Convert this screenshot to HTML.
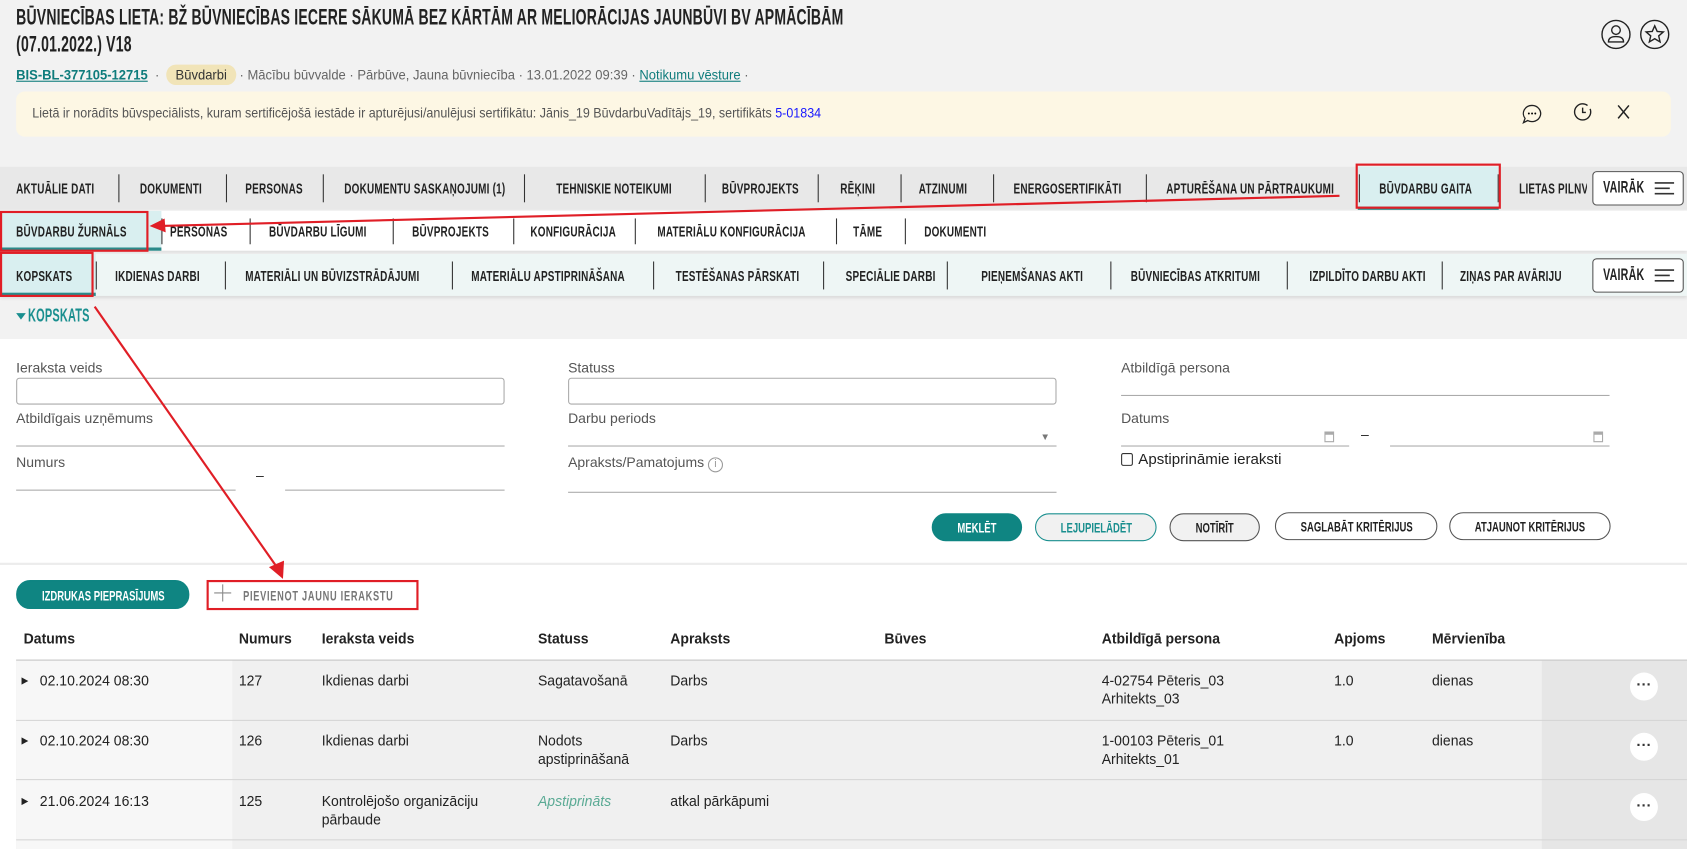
<!DOCTYPE html>
<html><head><meta charset="utf-8"><style>
*{margin:0;padding:0;box-sizing:border-box}
html,body{width:1687px;height:849px;overflow:hidden;background:#f2f2f2}
#w{position:absolute;left:0;top:0;width:1568px;height:789px;transform:scale(1.07589,1.07605);transform-origin:0 0;font-family:"Liberation Sans",Arial,sans-serif;color:#222}
.a{position:absolute}
.c{position:absolute;font-weight:bold;white-space:nowrap;transform:scaleX(.66);transform-origin:0 50%;font-size:14px;color:#222;letter-spacing:.3px}
.d{position:absolute;width:1px;background:#333}
.lbl{position:absolute;font-size:13px;color:#555}
.ul{position:absolute;height:1px;background:#aaa}
.btn{position:absolute;height:26px;border-radius:13px;border:1px solid #555;background:#fff}
.btn span{position:absolute;left:50%;top:5px;font-weight:bold;font-size:13px;white-space:nowrap;transform:translateX(-50%) scaleX(.68);color:#222}
.t{position:absolute;font-size:14px;color:#222;line-height:17px;transform:scaleX(.93);transform-origin:0 0;white-space:nowrap}
.th{position:absolute;font-size:14px;font-weight:bold;color:#222;top:585px;transform:scaleX(.93);transform-origin:0 0}
.dots{position:absolute;left:1515px;width:26px;height:26px;border-radius:50%;background:#fff;text-align:center;font-size:14px;font-weight:bold;line-height:22px;color:#333}
</style></head><body><div id="w">

<div class="c" style="left:15px;top:5px;font-size:21px;line-height:23px;transform:scaleX(.62)">BŪVNIECĪBAS LIETA: BŽ BŪVNIECĪBAS IECERE SĀKUMĀ BEZ KĀRTĀM AR MELIORĀCIJAS JAUNBŪVI BV APMĀCĪBĀM</div>
<div class="c" style="left:15px;top:30px;font-size:21px;line-height:23px;transform:scaleX(.62)">(07.01.2022.) V18</div>

<svg class="a" style="left:1488px;top:17px" width="80" height="30" viewBox="0 0 80 30">
<circle cx="14" cy="15" r="13" fill="none" stroke="#222" stroke-width="1.3"/>
<circle cx="14" cy="11" r="4" fill="none" stroke="#222" stroke-width="1.3"/>
<path d="M7 22 Q7 17 14 17 Q21 17 21 22 Z" fill="none" stroke="#222" stroke-width="1.3"/>
<circle cx="50" cy="15" r="13" fill="none" stroke="#222" stroke-width="1.3"/>
<path d="M50 7 L52.3 12.2 L58 12.7 L53.7 16.4 L55 22 L50 19 L45 22 L46.3 16.4 L42 12.7 L47.7 12.2 Z" fill="none" stroke="#222" stroke-width="1.3"/>
</svg>

<div class="a" style="left:15px;top:62px;font-size:13px;color:#666;white-space:nowrap;transform:scaleX(.93);transform-origin:0 0">
<b style="color:#0f7c7c;text-decoration:underline">BIS-BL-377105-12715</b> &nbsp;· &nbsp;<span style="background:#f1e4b8;color:#333;border-radius:10px;padding:2px 9px">Būvdarbi</span> · Mācību būvvalde · Pārbūve, Jauna būvniecība · 13.01.2022 09:39 · <span style="color:#0f7c7c;text-decoration:underline">Notikumu vēsture</span> ·</div>

<div class="a" style="left:15px;top:85px;width:1538px;height:42px;background:#fdf7e4;border-radius:8px"></div>
<div class="a" style="left:30px;top:98px;font-size:12.5px;color:#555;white-space:nowrap;transform:scaleX(.93);transform-origin:0 0">Lietā ir norādīts būvspeciālists, kuram sertificējošā iestāde ir apturējusi/anulējusi sertifikātu: Jānis_19 BūvdarbuVadītājs_19, sertifikāts <span style="color:#1a1aff">5-01834</span></div>
<svg class="a" style="left:1412px;top:93px" width="110" height="24" viewBox="0 0 110 24">
<path d="M12 5 a8 7.5 0 1 1 -4 14 l-4 2 l1.5 -4 a8 7.5 0 0 1 6.5 -12z" fill="none" stroke="#222" stroke-width="1.2"/>
<circle cx="9" cy="12.5" r=".9"/><circle cx="12" cy="12.5" r=".9"/><circle cx="15" cy="12.5" r=".9"/>
<circle cx="59" cy="11" r="7.5" fill="none" stroke="#222" stroke-width="1.3" stroke-dasharray="40 4"/>
<path d="M59 7 V11.5 H62" fill="none" stroke="#222" stroke-width="1.3"/>
<path d="M100 5 L110 17 M110 5 L100 17" stroke="#222" stroke-width="1.4" transform="translate(-8,0)"/>
</svg>

<!-- Tab row 1 -->
<div class="a" style="left:0;top:155px;width:1568px;height:40px;background:#e8e8e8"></div>
<div class="a" style="left:1262px;top:155px;width:131px;height:40px;background:#d9eff0;border-bottom:3px solid #2a8a8a"></div>
<div class="c" style="left:15px;top:167px">AKTUĀLIE DATI</div>
<div class="c" style="left:130px;top:167px">DOKUMENTI</div>
<div class="c" style="left:228px;top:167px">PERSONAS</div>
<div class="c" style="left:320px;top:167px">DOKUMENTU SASKAŅOJUMI (1)</div>
<div class="c" style="left:517px;top:167px">TEHNISKIE NOTEIKUMI</div>
<div class="c" style="left:671px;top:167px">BŪVPROJEKTS</div>
<div class="c" style="left:781px;top:167px">RĒĶINI</div>
<div class="c" style="left:854px;top:167px">ATZINUMI</div>
<div class="c" style="left:942px;top:167px">ENERGOSERTIFIKĀTI</div>
<div class="c" style="left:1084px;top:167px">APTURĒŠANA UN PĀRTRAUKUMI</div>
<div class="c" style="left:1282px;top:167px">BŪVDARBU GAITA</div>
<div class="a" style="left:1405px;top:155px;width:70px;height:40px;overflow:hidden"><div class="c" style="left:7px;top:12px">LIETAS PILNVARAS</div></div>
<div class="d" style="left:110px;top:162px;height:26px"></div><div class="d" style="left:210px;top:162px;height:26px"></div><div class="d" style="left:300px;top:162px;height:26px"></div><div class="d" style="left:487px;top:162px;height:26px"></div><div class="d" style="left:655px;top:162px;height:26px"></div><div class="d" style="left:760px;top:162px;height:26px"></div><div class="d" style="left:837px;top:162px;height:26px"></div><div class="d" style="left:923px;top:162px;height:26px"></div><div class="d" style="left:1065px;top:162px;height:26px"></div><div class="d" style="left:1263px;top:162px;height:26px"></div><div class="d" style="left:1392px;top:162px;height:26px"></div>
<div class="a" style="left:1480px;top:159px;width:85px;height:32px;border:1px solid #555;border-radius:4px;background:#fff"></div>
<div class="c" style="left:1490px;top:166px;font-size:15px">VAIRĀK</div>
<svg class="a" style="left:1537px;top:167px" width="20" height="16"><path d="M1 3H19M1 8H15M1 13H19" stroke="#333" stroke-width="1.5"/></svg>

<!-- Tab row 2 -->
<div class="a" style="left:0;top:196px;width:1568px;height:37px;background:#fff;box-shadow:0 2px 3px rgba(0,0,0,.08)"></div>
<div class="a" style="left:0;top:196px;width:150px;height:37px;background:#d9eff0;border-bottom:3px solid #2a8a8a"></div>
<div class="c" style="left:15px;top:207px">BŪVDARBU ŽURNĀLS</div>
<div class="c" style="left:158px;top:207px">PERSONAS</div>
<div class="c" style="left:250px;top:207px">BŪVDARBU LĪGUMI</div>
<div class="c" style="left:383px;top:207px">BŪVPROJEKTS</div>
<div class="c" style="left:493px;top:207px">KONFIGURĀCIJA</div>
<div class="c" style="left:611px;top:207px">MATERIĀLU KONFIGURĀCIJA</div>
<div class="c" style="left:793px;top:207px">TĀME</div>
<div class="c" style="left:859px;top:207px">DOKUMENTI</div>
<div class="d" style="left:150px;top:203px;height:24px"></div><div class="d" style="left:232px;top:203px;height:24px"></div><div class="d" style="left:365px;top:203px;height:24px"></div><div class="d" style="left:477px;top:203px;height:24px"></div><div class="d" style="left:590px;top:203px;height:24px"></div><div class="d" style="left:777px;top:203px;height:24px"></div><div class="d" style="left:841px;top:203px;height:24px"></div>

<!-- Tab row 3 -->
<div class="a" style="left:0;top:236px;width:1568px;height:39px;background:#eef6f5;box-shadow:0 2px 3px rgba(0,0,0,.1)"></div>
<div class="a" style="left:0;top:236px;width:89px;height:39px;background:#d9eff0;border-bottom:3px solid #2a8a8a"></div>
<div class="c" style="left:15px;top:248px">KOPSKATS</div>
<div class="c" style="left:107px;top:248px">IKDIENAS DARBI</div>
<div class="c" style="left:228px;top:248px">MATERIĀLI UN BŪVIZSTRĀDĀJUMI</div>
<div class="c" style="left:438px;top:248px">MATERIĀLU APSTIPRINĀŠANA</div>
<div class="c" style="left:628px;top:248px">TESTĒŠANAS PĀRSKATI</div>
<div class="c" style="left:786px;top:248px">SPECIĀLIE DARBI</div>
<div class="c" style="left:912px;top:248px">PIEŅEMŠANAS AKTI</div>
<div class="c" style="left:1051px;top:248px">BŪVNIECĪBAS ATKRITUMI</div>
<div class="c" style="left:1217px;top:248px">IZPILDĪTO DARBU AKTI</div>
<div class="a" style="left:1350px;top:236px;width:125px;height:39px;overflow:hidden"><div class="c" style="left:7px;top:12px">ZIŅAS PAR AVĀRIJU</div></div>
<div class="d" style="left:89px;top:243px;height:26px"></div><div class="d" style="left:209px;top:243px;height:26px"></div><div class="d" style="left:420px;top:243px;height:26px"></div><div class="d" style="left:607px;top:243px;height:26px"></div><div class="d" style="left:765px;top:243px;height:26px"></div><div class="d" style="left:880px;top:243px;height:26px"></div><div class="d" style="left:1032px;top:243px;height:26px"></div><div class="d" style="left:1196px;top:243px;height:26px"></div><div class="d" style="left:1340px;top:243px;height:26px"></div>
<div class="a" style="left:1480px;top:240px;width:85px;height:32px;border:1px solid #555;border-radius:4px;background:#fff"></div>
<div class="c" style="left:1490px;top:247px;font-size:15px">VAIRĀK</div>
<svg class="a" style="left:1537px;top:248px" width="20" height="16"><path d="M1 3H19M1 8H15M1 13H19" stroke="#333" stroke-width="1.5"/></svg>

<svg class="a" style="left:15px;top:290px" width="10" height="8"><path d="M0 1H9L4.5 7Z" fill="#1a8f8f"/></svg>
<div class="c" style="left:26px;top:284px;font-size:17px;color:#1a8f8f;transform:scaleX(.6)">KOPSKATS</div>

<!-- form -->
<div class="a" style="left:0;top:315px;width:1568px;height:474px;background:#fff"></div>
<div class="a" style="left:0;top:523px;width:1568px;height:2px;background:#ececec"></div>

<div class="lbl" style="left:15px;top:334px">Ieraksta veids</div>
<div class="a" style="left:15px;top:351px;width:454px;height:25px;border:1px solid #aaa;border-radius:3px"></div>
<div class="lbl" style="left:15px;top:381px">Atbildīgais uzņēmums</div>
<div class="ul" style="left:15px;top:414px;width:454px"></div>
<div class="lbl" style="left:15px;top:422px">Numurs</div>
<div class="ul" style="left:15px;top:455px;width:204px"></div>
<div class="a" style="left:238px;top:434px;font-size:13px">–</div>
<div class="ul" style="left:265px;top:455px;width:204px"></div>

<div class="lbl" style="left:528px;top:334px">Statuss</div>
<div class="a" style="left:528px;top:351px;width:454px;height:25px;border:1px solid #aaa;border-radius:3px"></div>
<div class="lbl" style="left:528px;top:381px">Darbu periods</div>
<div class="ul" style="left:528px;top:414px;width:454px"></div>
<div class="a" style="left:967px;top:401px;font-size:9px;color:#777">▼</div>
<div class="lbl" style="left:528px;top:422px">Apraksts/Pamatojums <span style="display:inline-block;width:14px;height:14px;border:1px solid #999;border-radius:50%;font-size:10px;text-align:center;line-height:12px;color:#999">i</span></div>
<div class="ul" style="left:528px;top:457px;width:454px"></div>

<div class="lbl" style="left:1042px;top:334px">Atbildīgā persona</div>
<div class="ul" style="left:1042px;top:367px;width:454px"></div>
<div class="lbl" style="left:1042px;top:381px">Datums</div>
<div class="ul" style="left:1042px;top:414px;width:212px"></div>
<div class="a" style="left:1231px;top:401px;width:9px;height:10px;border:1px solid #aaa;border-top-width:3px"></div>
<div class="a" style="left:1265px;top:396px;font-size:13px">–</div>
<div class="ul" style="left:1292px;top:414px;width:204px"></div>
<div class="a" style="left:1481px;top:401px;width:9px;height:10px;border:1px solid #aaa;border-top-width:3px"></div>
<div class="a" style="left:1042px;top:421px;width:11px;height:12px;border:1px solid #333;border-radius:2px"></div>
<div class="a" style="left:1058px;top:418px;font-size:14px;color:#222">Apstiprināmie ieraksti</div>

<div class="btn" style="left:866px;top:477px;width:84px;background:#0f8582;border-color:#0f8582"><span style="color:#fff">MEKLĒT</span></div>
<div class="btn" style="left:962px;top:477px;width:113px;background:#f1f1f1;border-color:#1a8f8f"><span style="color:#1a8f8f">LEJUPIELĀDĒT</span></div>
<div class="btn" style="left:1087px;top:477px;width:84px;background:#f1f1f1"><span>NOTĪRĪT</span></div>
<div class="btn" style="left:1185px;top:476px;width:151px"><span>SAGLABĀT KRITĒRIJUS</span></div>
<div class="btn" style="left:1347px;top:476px;width:150px"><span>ATJAUNOT KRITĒRIJUS</span></div>

<div class="btn" style="left:15px;top:539px;width:161px;height:27px;background:#0f8582;border-color:#0f8582"><span style="color:#fff;top:6px">IZDRUKAS PIEPRASĪJUMS</span></div>
<svg class="a" style="left:199px;top:543px" width="16" height="16"><path d="M8 0V16M0 8H16" stroke="#888" stroke-width="1"/></svg>
<div class="c" style="left:226px;top:546px;color:#777;font-size:13px;letter-spacing:1px">PIEVIENOT JAUNU IERAKSTU</div>

<!-- table -->
<div class="th" style="left:22px">Datums</div>
<div class="th" style="left:222px">Numurs</div>
<div class="th" style="left:299px">Ieraksta veids</div>
<div class="th" style="left:500px">Statuss</div>
<div class="th" style="left:623px">Apraksts</div>
<div class="th" style="left:822px">Būves</div>
<div class="th" style="left:1024px">Atbildīgā persona</div>
<div class="th" style="left:1240px">Apjoms</div>
<div class="th" style="left:1331px">Mērvienība</div>
<div class="a" style="left:15px;top:613px;width:1553px;height:1px;background:#bbb"></div>

<div class="a" style="left:15px;top:614px;width:1553px;height:175px;background:#f0f0f0"></div>
<div class="a" style="left:15px;top:614px;width:201px;height:175px;background:#f7f7f7"></div>
<div class="a" style="left:1433px;top:614px;width:135px;height:175px;background:#e6e6e6"></div>
<div class="a" style="left:15px;top:669px;width:1553px;height:1px;background:#d6d6d6"></div>
<div class="a" style="left:15px;top:724px;width:1553px;height:1px;background:#d6d6d6"></div>
<div class="a" style="left:15px;top:780px;width:1553px;height:1px;background:#d6d6d6"></div>

<div class="t" style="left:20px;top:624px;font-size:9px">▶</div>
<div class="t" style="left:37px;top:624px">02.10.2024 08:30</div>
<div class="t" style="left:222px;top:624px">127</div>
<div class="t" style="left:299px;top:624px">Ikdienas darbi</div>
<div class="t" style="left:500px;top:624px">Sagatavošanā</div>
<div class="t" style="left:623px;top:624px">Darbs</div>
<div class="t" style="left:1024px;top:624px">4-02754 Pēteris_03<br>Arhitekts_03</div>
<div class="t" style="left:1240px;top:624px">1.0</div>
<div class="t" style="left:1331px;top:624px">dienas</div>
<div class="dots" style="top:625px">···</div>

<div class="t" style="left:20px;top:680px;font-size:9px">▶</div>
<div class="t" style="left:37px;top:680px">02.10.2024 08:30</div>
<div class="t" style="left:222px;top:680px">126</div>
<div class="t" style="left:299px;top:680px">Ikdienas darbi</div>
<div class="t" style="left:500px;top:680px">Nodots<br>apstiprināšanā</div>
<div class="t" style="left:623px;top:680px">Darbs</div>
<div class="t" style="left:1024px;top:680px">1-00103 Pēteris_01<br>Arhitekts_01</div>
<div class="t" style="left:1240px;top:680px">1.0</div>
<div class="t" style="left:1331px;top:680px">dienas</div>
<div class="dots" style="top:681px">···</div>

<div class="t" style="left:20px;top:736px;font-size:9px">▶</div>
<div class="t" style="left:37px;top:736px">21.06.2024 16:13</div>
<div class="t" style="left:222px;top:736px">125</div>
<div class="t" style="left:299px;top:736px">Kontrolējošo organizāciju<br>pārbaude</div>
<div class="t" style="left:500px;top:736px;color:#5aaa94;font-style:italic">Apstiprināts</div>
<div class="t" style="left:623px;top:736px">atkal pārkāpumi</div>
<div class="dots" style="top:737px">···</div>

<!-- annotations -->
<svg class="a" style="left:0;top:0" width="1568" height="789">
<g fill="none" stroke="#e01e26" stroke-width="2">
<rect x="1261" y="153" width="133" height="40"/>
<rect x="1" y="197" width="136" height="36"/>
<rect x="1" y="235" width="85" height="40"/>
<rect x="193" y="540" width="195" height="26"/>
<path d="M1245 182 L150 210"/>
<path d="M88 285 L258 528"/>
</g>
<path d="M139 210 L153 203 L154 216 Z" fill="#e01e26"/>
<path d="M263 538 L250 527 L264 521 Z" fill="#e01e26"/>
</svg>
</div></body></html>
